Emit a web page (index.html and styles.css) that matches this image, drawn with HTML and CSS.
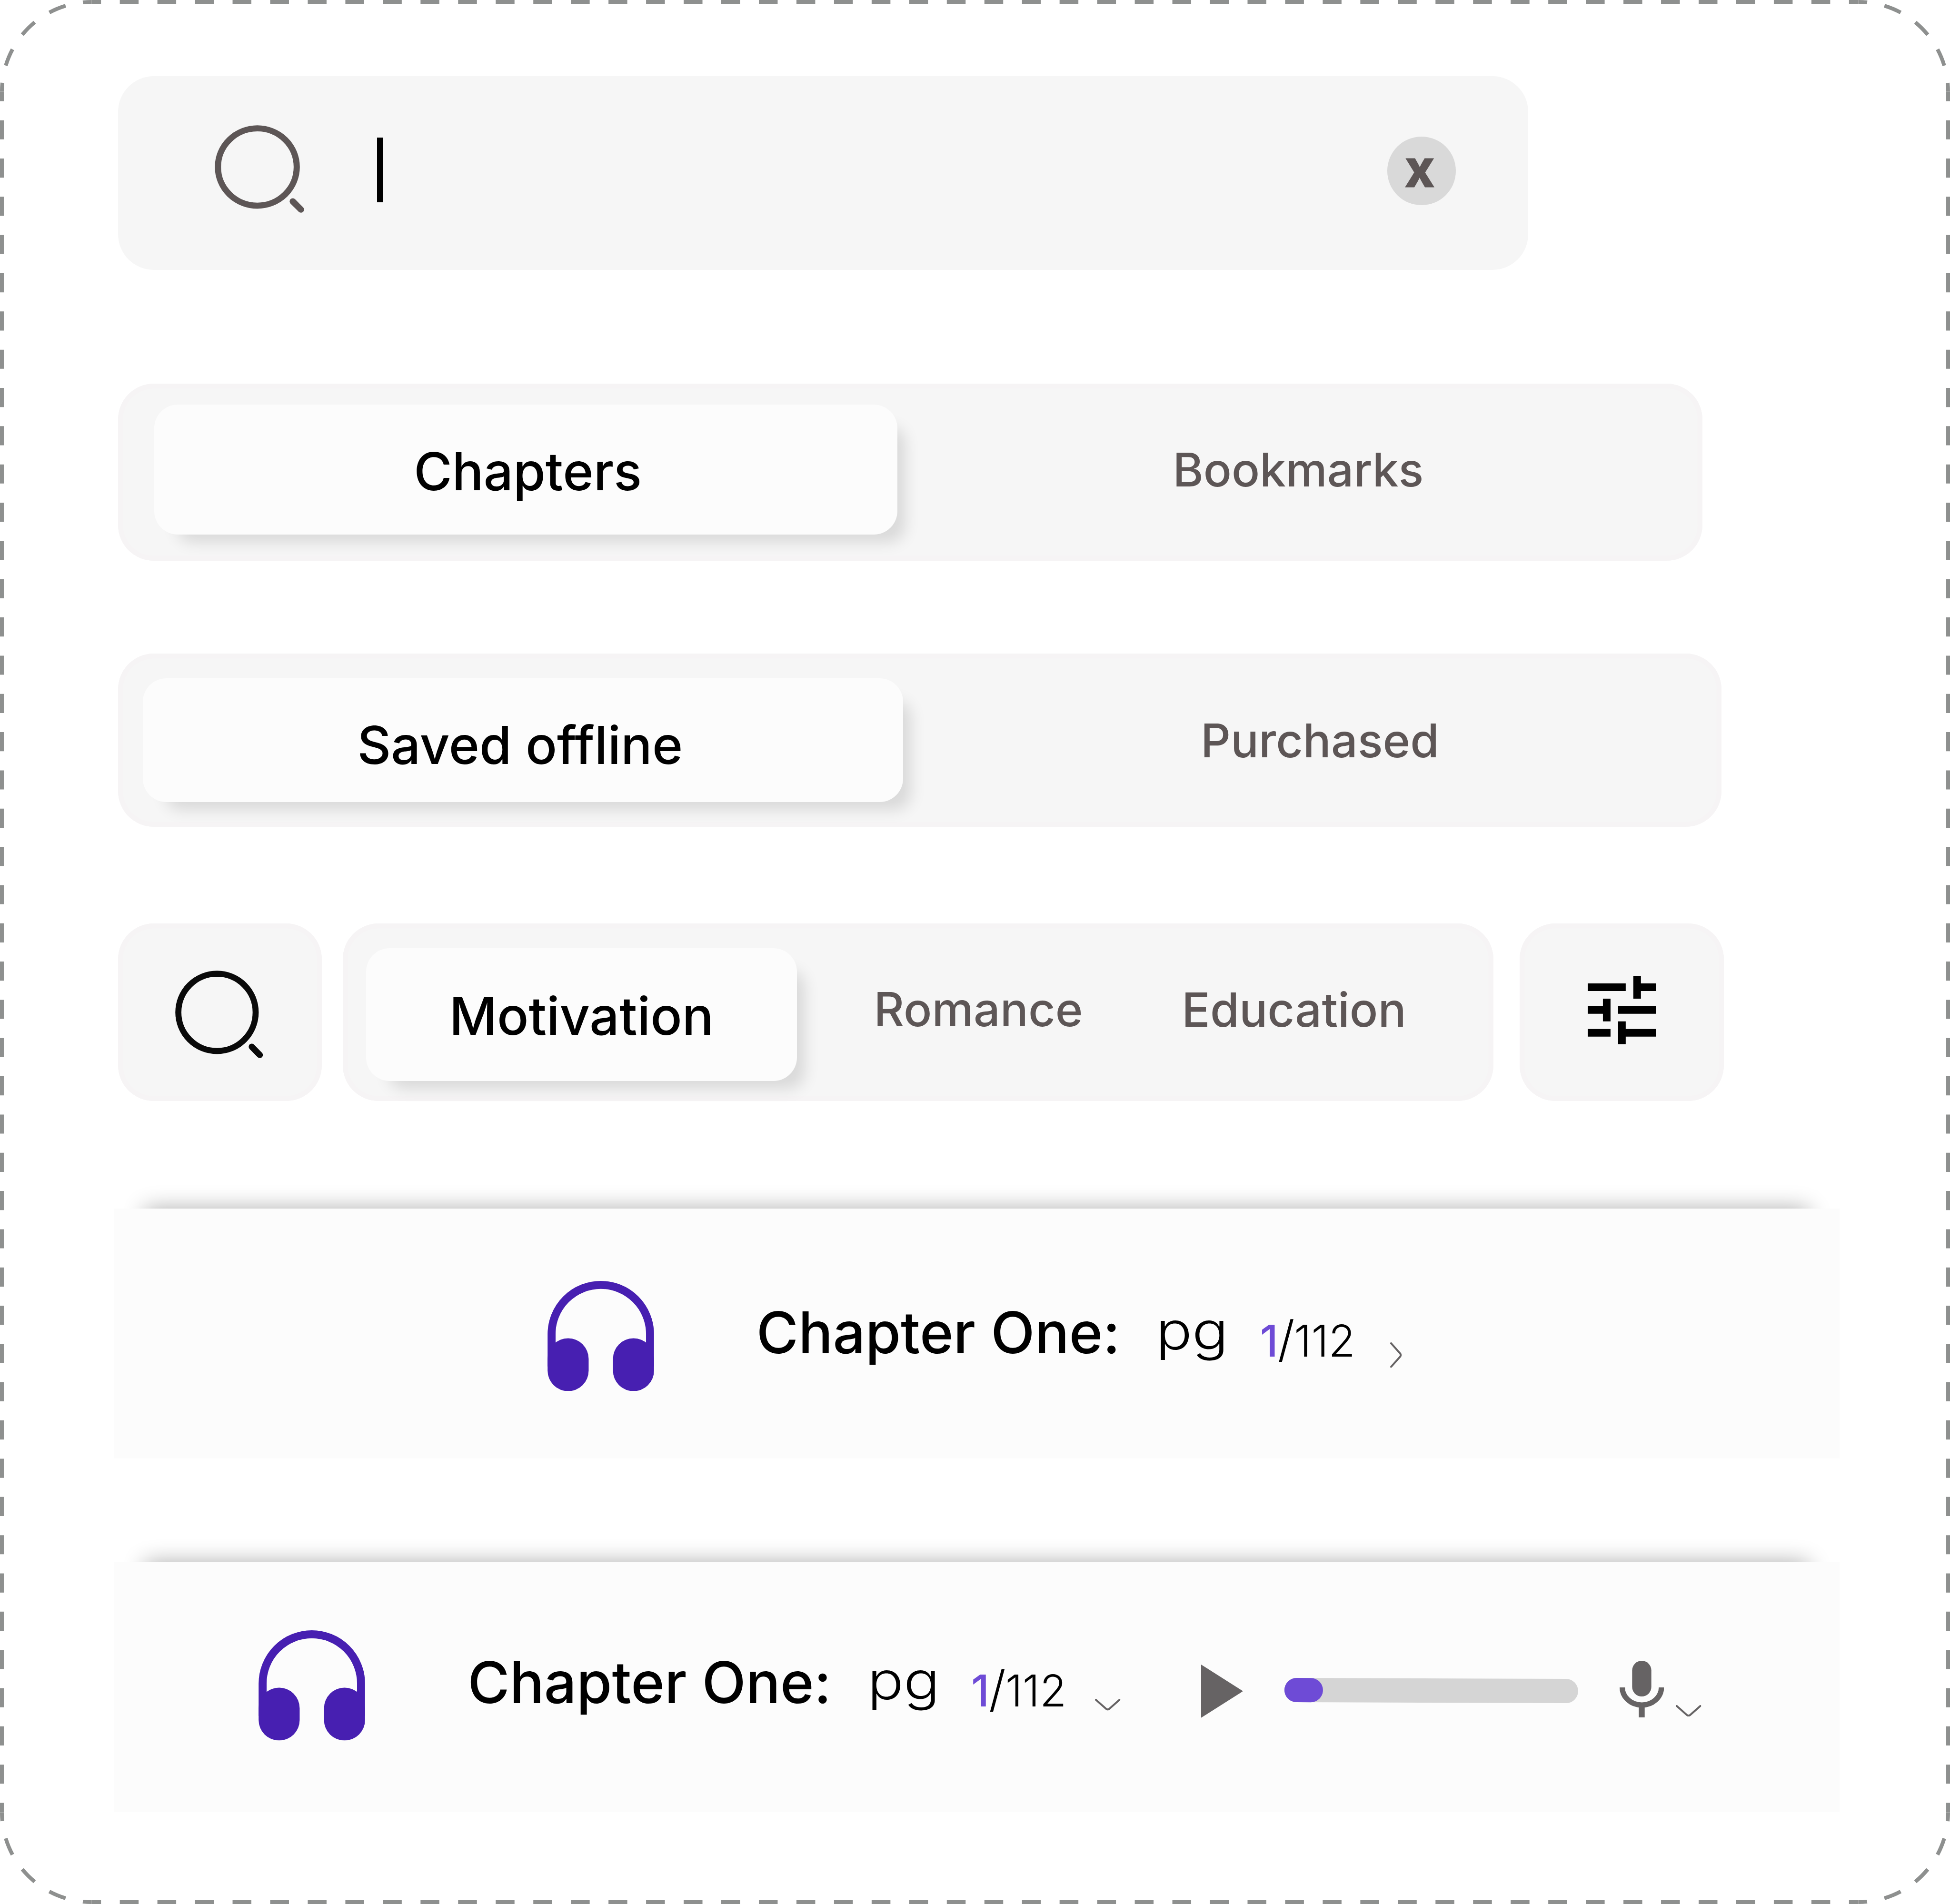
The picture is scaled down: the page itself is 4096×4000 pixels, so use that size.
FILE: index.html
```
<!DOCTYPE html>
<html lang="en">
<head>
<meta charset="utf-8">
<title>Reader components</title>
<link rel="stylesheet" href="styles.css">
</head>
<body>
<svg width="0" height="0" class="defs" aria-hidden="true">
  <symbol id="search" viewBox="-110 -110 231 231" preserveAspectRatio="none">
    <circle r="101.7" fill="none" stroke="currentColor" stroke-width="16"/>
    <path d="M91.5 90.5L112.5 112" fill="none" stroke="currentColor" stroke-width="16.5" stroke-linecap="round"/>
  </symbol>
  <symbol id="tune" viewBox="3 3 18 18">
    <path fill="currentColor" d="M3 17v2h6v-2H3zM3 5v2h10V5H3zm10 16v-2h8v-2h-8v-2h-2v6h2zM7 9v2H3v2h4v2h2V9H7zm14 4v-2H11v2h10zm-6-4h2V7h4V5h-4V3h-2v6z"/>
  </symbol>
  <symbol id="headphones" viewBox="0 0 280 290">
    <path d="M10.5 225V140a129.500 129.500 0 0 1 259 0V225" fill="none" stroke="currentColor" stroke-width="21"/>
    <rect y="151" width="108" height="139" rx="54" fill="currentColor"/>
    <rect x="172" y="151" width="108" height="139" rx="54" fill="currentColor"/>
  </symbol>
  <symbol id="chevron-right" viewBox="0 0 31 67">
    <path d="M2.500 2.500L26 29q4 4.500 0 9L2.500 64.500" fill="none" stroke="currentColor" stroke-width="5" stroke-linecap="round"/>
  </symbol>
  <symbol id="chevron-down" viewBox="0 0 67 31">
    <path d="M2.500 2.500L29 26q4.500 4 9 0L64.500 2.500" fill="none" stroke="currentColor" stroke-width="5" stroke-linecap="round"/>
  </symbol>
  <symbol id="play" viewBox="0 0 110 140">
    <path d="M0 0L108.500 68.800q1.500 1.200 0 2.400L0 140z" fill="currentColor"/>
  </symbol>
  <symbol id="mic" viewBox="0 0 117 149">
    <rect x="33" width="50.500" height="94" rx="25.250" fill="currentColor"/>
    <path d="M7 70a51.500 46.500 0 0 0 103 0" fill="none" stroke="currentColor" stroke-width="14"/>
    <path d="M50.500 118h15.500v31H50.500z" fill="currentColor"/>
  </symbol>
</svg>

<main class="board">
  <svg class="frame" viewBox="0 0 5130 5010" preserveAspectRatio="none" aria-hidden="true">
    <path class="h" d="M241 5H4889M241 5005H4889"/>
    <path class="v" d="M5 241V4769M5125 241V4769"/>
    <path class="c" d="M5 241A236 236 0 0 1 241 5M4889 5A236 236 0 0 1 5125 241M5125 4769A236 236 0 0 1 4889 5005M241 5005A236 236 0 0 1 5 4769"/>
  </svg>

  <div class="searchbar">
    <svg class="glass"><use href="#search"/></svg>
    <span class="caret"></span>
    <button class="clear"><span>x</span></button>
  </div>

  <div class="segment chapters">
    <div class="pill">Chapters</div>
    <div class="tab">Bookmarks</div>
  </div>

  <div class="segment saved">
    <div class="pill">Saved offline</div>
    <div class="tab">Purchased</div>
  </div>

  <div class="filters">
    <div class="tile"><svg class="glass"><use href="#search"/></svg></div>
    <div class="segment genres">
      <div class="pill">Motivation</div>
      <div class="tab">Romance</div>
      <div class="tab last">Education</div>
    </div>
    <div class="tile tile-tune"><svg class="tune"><use href="#tune"/></svg></div>
  </div>

  <section class="player compact">
    <svg class="headphones"><use href="#headphones"/></svg>
    <div class="title">Chapter One:</div>
    <div class="pg">pg</div>
    <div class="pages"><b>1</b><i>/</i><span>112</span></div>
    <svg class="chev-right"><use href="#chevron-right"/></svg>
  </section>

  <section class="player full">
    <svg class="headphones"><use href="#headphones"/></svg>
    <div class="title">Chapter One:</div>
    <div class="pg">pg</div>
    <div class="pages"><b>1</b><i>/</i><span>112</span></div>
    <svg class="chev-down"><use href="#chevron-down"/></svg>
    <svg class="play"><use href="#play"/></svg>
    <div class="progress"><div class="bar"></div></div>
    <svg class="mic"><use href="#mic"/></svg>
    <svg class="chev-down voice"><use href="#chevron-down"/></svg>
  </section>
</main>
</body>
</html>
```
FILE: styles.css
```
/* 1rem = 100 design units; the board is 51.3 x 50.1 rem */
html { font-size: calc(100vw / 51.3); }
* { box-sizing: border-box; }
body {
  margin: 0;
  overflow: hidden;
  background: #fff;
  color: #000;
  font-family: Inter, "Liberation Sans", sans-serif;
  font-weight: 500;
}
svg { display: block; flex: none; }
.defs { position: absolute; }

.board {
  position: relative;
  height: 100vh;
  padding: 2rem 0 0 3.1rem;
  overflow: hidden;
}
.frame { position: absolute; top: 0; left: 0; width: 100%; height: 100%; }
.frame path { fill: none; stroke: #8e908f; stroke-width: 10; }
.frame .h { stroke-dasharray: 49.447 49.447; stroke-dashoffset: 24.723; }
.frame .v { stroke-dasharray: 50.311 50.311; stroke-dashoffset: 25.156; }
.frame .c { stroke-dasharray: 46.338 46.338; stroke-dashoffset: 23.169; }

/* Search bar */
.searchbar {
  display: flex;
  align-items: flex-start;
  width: 37.1rem;
  height: 5.1rem;
  border-radius: .94rem;
  background: #f6f6f6;
}
.glass { width: 2.31rem; height: 2.31rem; }
.searchbar .glass { width: 2.355rem; margin: 1.3rem 0 0 2.546rem; color: #5d5656; }
.caret { width: .16rem; height: 1.706rem; margin: 1.62rem 0 0 1.923rem; background: #000; }
.clear {
  width: 1.8rem;
  height: 1.8rem;
  margin: 1.6rem 0 0 26.416rem;
  padding: .165rem 0 0 .466rem;
  border: 0;
  border-radius: 50%;
  background: #d9d9d9;
  color: #5d5656;
  font: 700 1.32rem/1 Inter, sans-serif;
  text-align: left;
}
.clear span {
  display: block;
  height: 1.635rem;
  -webkit-text-stroke: .035rem #5d5656;
  stroke-linejoin: round;
}

/* Segmented controls */
.segment {
  display: flex;
  align-items: flex-start;
  border-radius: .94rem;
  background: #f6f6f6;
  box-shadow: inset 0 0 0 .13rem #f6f4f5;
  line-height: 1;
  white-space: nowrap;
}
.pill {
  flex: none;
  border-radius: .62rem;
  background: #fcfcfc;
  box-shadow: .4rem .4rem .4rem -.2rem rgba(0, 0, 0, .12);
  font-size: 1.37rem;
}
.tab { color: #5d5656; font-size: 1.23rem; }

.chapters { width: 41.69rem; height: 4.65rem; margin-top: 3rem; padding: .546rem 0 0 .96rem; }
.chapters .pill { width: 19.55rem; height: 3.414rem; padding: 1.083rem 0 0 6.826rem; font-size: 1.375rem; }
.chapters .tab { margin: 1.104rem 0 0 7.243rem; font-size: 1.227rem; }

.saved { width: 42.19rem; height: 4.56rem; margin-top: 2.45rem; padding: .65rem 0 0 .654rem; }
.saved .pill { width: 20.006rem; height: 3.26rem; padding: 1.076rem 0 0 5.647rem; font-size: 1.372rem; }
.saved .tab { margin: 1.02rem 0 0 7.827rem; }

.filters { display: flex; height: 4.675rem; margin-top: 2.54rem; }
.tile {
  width: 5.365rem;
  padding: 1.239rem 0 0 1.515rem;
  border-radius: .94rem;
  background: #f6f6f6;
  box-shadow: inset 0 0 0 .13rem #f6f4f5;
  color: #0a0a0a;
}
.tile-tune { margin-left: .694rem; padding: 1.375rem 0 0 1.785rem; color: #000; }
.tune { width: 1.8rem; height: 1.8rem; }
.genres { width: 30.266rem; margin-left: .555rem; padding: .65rem 0 0 .615rem; }
.genres .pill { width: 11.335rem; height: 3.49rem; padding: 1.091rem 0 0 2.181rem; font-size: 1.38rem; }
.genres .tab { margin: 1.006rem 0 0 2.02rem; font-size: 1.233rem; }
.genres .tab.last { margin-left: 2.601rem; font-size: 1.237rem; }

/* Player strips */
.player {
  display: flex;
  align-items: flex-start;
  width: 45.395rem;
  height: 6.58rem;
  margin-left: -.095rem;
  background: #fcfcfc;
  box-shadow: 0 -.8rem .56rem -.8rem rgba(0, 0, 0, .33);
  line-height: 1;
  white-space: nowrap;
  color: #666364;
}
.compact { margin-top: 2.825rem; padding: 1.9rem 0 0 11.393rem; }
.full { margin-top: 2.72rem; padding: 1.8rem 0 0 3.795rem; }
.headphones { width: 2.806rem; height: 2.9rem; color: #471fb1; }
.title { margin: .606rem 0 0 2.695rem; color: #000; font-size: 1.507rem; }
.pg {
  margin: .631rem 0 0 .945rem;
  color: #000;
  font-size: 1.37rem;
  font-weight: 350;
  transform: scaleX(1.155);
  transform-origin: 0 0;
}
.pages {
  width: 2.52rem;
  height: 1.15rem;
  margin: 1.006rem 0 0 1.085rem;
  color: #000;
  font-size: 1.15rem;
  font-weight: 350;
}
.pages b { color: #6e4bd6; font-weight: 450; }
.pages i { margin: 0 -.015rem; font-size: 1.29rem; font-style: normal; font-weight: 300; line-height: 0; }
.chev-right { width: .31rem; height: .67rem; margin: 1.62rem 0 0 .9rem; }
.chev-down { width: .67rem; height: .31rem; margin: 1.8rem 0 0 .736rem; }
.play { width: 1.1rem; height: 1.4rem; margin: .9rem 0 0 2.127rem; }
.progress {
  width: 7.73rem;
  height: .64rem;
  margin: 1.25rem 0 0 1.085rem;
  border-radius: .32rem;
  background: #d5d5d5;
  transform: rotate(.2deg);
  transform-origin: 0 0;
}
.bar { width: 1.01rem; height: 100%; border-radius: .32rem; background: #6e4bd6; }
.mic { width: 1.17rem; height: 1.49rem; margin: .8rem 0 0 1.085rem; }
.chev-down.voice { margin: 1.96rem 0 0 .317rem; }
```
